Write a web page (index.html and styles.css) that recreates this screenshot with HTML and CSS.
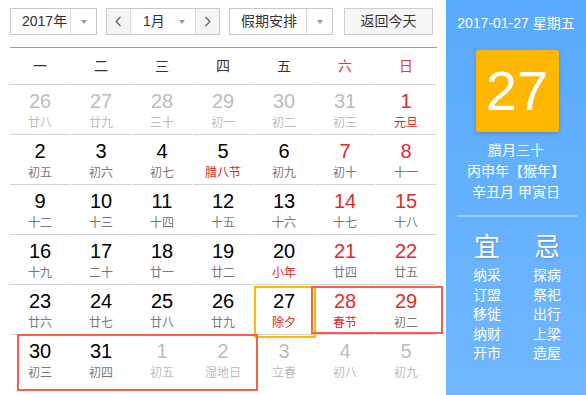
FILE: index.html
```html
<!DOCTYPE html>
<html lang="zh-CN">
<head>
<meta charset="utf-8">
<title>万年历</title>
<link rel="stylesheet" href="styles.css">
</head>
<body>
<div class="app">
  <div class="main">
    <div class="toolbar">
      <div class="select year">
        <span class="val">2017年</span>
        <span class="arrow"><i class="tri"></i></span>
      </div>
      <div class="monthgroup">
        <span class="nav prev"><svg width="7" height="11" viewBox="0 0 7 11"><polyline points="5.5,0.8 1.2,5.5 5.5,10.2" fill="none" stroke="#555" stroke-width="1.2"/></svg></span>
        <span class="month"><span>1月</span><i class="tri"></i></span>
        <span class="nav next"><svg width="7" height="11" viewBox="0 0 7 11"><polyline points="1.5,0.8 5.8,5.5 1.5,10.2" fill="none" stroke="#555" stroke-width="1.2"/></svg></span>
      </div>
      <div class="select holiday">
        <span class="val">假期安排</span>
        <span class="arrow"><i class="tri"></i></span>
      </div>
      <span class="today-btn">返回今天</span>
    </div>
    <div class="weekdays">
      <span>一</span><span>二</span><span>三</span><span>四</span><span>五</span><span class="we">六</span><span class="we">日</span>
    </div>
    <div class="grid">
      <div class="cell other"><b>26</b><i>廿八</i></div>
      <div class="cell other"><b>27</b><i>廿九</i></div>
      <div class="cell other"><b>28</b><i>三十</i></div>
      <div class="cell other"><b>29</b><i>初一</i></div>
      <div class="cell other"><b>30</b><i>初二</i></div>
      <div class="cell other"><b>31</b><i>初三</i></div>
      <div class="cell red"><b>1</b><i class="fest">元旦</i></div>

      <div class="cell"><b>2</b><i>初五</i></div>
      <div class="cell"><b>3</b><i>初六</i></div>
      <div class="cell"><b>4</b><i>初七</i></div>
      <div class="cell"><b>5</b><i class="fest">腊八节</i></div>
      <div class="cell"><b>6</b><i>初九</i></div>
      <div class="cell red"><b>7</b><i>初十</i></div>
      <div class="cell red"><b>8</b><i>十一</i></div>

      <div class="cell"><b>9</b><i>十二</i></div>
      <div class="cell"><b>10</b><i>十三</i></div>
      <div class="cell"><b>11</b><i>十四</i></div>
      <div class="cell"><b>12</b><i>十五</i></div>
      <div class="cell"><b>13</b><i>十六</i></div>
      <div class="cell red"><b>14</b><i>十七</i></div>
      <div class="cell red"><b>15</b><i>十八</i></div>

      <div class="cell"><b>16</b><i>十九</i></div>
      <div class="cell"><b>17</b><i>二十</i></div>
      <div class="cell"><b>18</b><i>廿一</i></div>
      <div class="cell"><b>19</b><i>廿二</i></div>
      <div class="cell"><b>20</b><i class="fest">小年</i></div>
      <div class="cell red"><b>21</b><i>廿四</i></div>
      <div class="cell red"><b>22</b><i>廿五</i></div>

      <div class="cell"><b>23</b><i>廿六</i></div>
      <div class="cell"><b>24</b><i>廿七</i></div>
      <div class="cell"><b>25</b><i>廿八</i></div>
      <div class="cell"><b>26</b><i>廿九</i></div>
      <div class="cell today"><b>27</b><i class="fest">除夕</i></div>
      <div class="cell red"><b>28</b><i class="fest">春节</i></div>
      <div class="cell red"><b>29</b><i>初二</i></div>

      <div class="cell"><b>30</b><i>初三</i></div>
      <div class="cell"><b>31</b><i>初四</i></div>
      <div class="cell other"><b>1</b><i>初五</i></div>
      <div class="cell other"><b>2</b><i>湿地日</i></div>
      <div class="cell other"><b>3</b><i>立春</i></div>
      <div class="cell other"><b>4</b><i>初八</i></div>
      <div class="cell other"><b>5</b><i>初九</i></div>

      <div class="holiday-box box-a"></div>
      <div class="holiday-box box-b"></div>
    </div>
  </div>
  <aside class="side">
    <div class="side-date">2017-01-27 星期五</div>
    <div class="big-day">27</div>
    <div class="lunar-info">
      <div>腊月三十</div>
      <div>丙申年【猴年】</div>
      <div>辛丑月 甲寅日</div>
    </div>
    <div class="sep"></div>
    <div class="yiji">
      <div class="col">
        <div class="yj-title">宜</div>
        <div>纳采</div><div>订盟</div><div>移徙</div><div>纳财</div><div>开市</div>
      </div>
      <div class="col">
        <div class="yj-title">忌</div>
        <div>探病</div><div>祭祀</div><div>出行</div><div>上梁</div><div>造屋</div>
      </div>
    </div>
  </aside>
</div>
</body>
</html>
```
FILE: styles.css
```css
* { box-sizing: border-box; }
html, body {
  margin: 0;
  padding: 0;
  width: 586px;
  height: 395px;
  overflow: hidden;
  background: #fff;
  font-family: "Liberation Sans", "Noto Sans CJK SC", sans-serif;
  color: #333;
}
.app {
  display: flex;
  width: 586px;
  height: 395px;
}
.main {
  width: 446px;
  padding: 8px 0 0 10px;
}
.toolbar {
  display: flex;
  height: 27px;
  font-size: 14px;
  color: #333;
}
.select {
  display: flex;
  height: 27px;
  border: 1px solid #c8c8c8;
  background: #fff;
}
.select .val {
  flex: 1;
  padding-left: 11px;
  line-height: 25px;
}
.select .arrow {
  width: 26px;
  border-left: 1px solid #dcdcdc;
  display: flex;
  align-items: center;
  justify-content: center;
}
.tri {
  display: block;
  width: 0;
  height: 0;
  border-style: solid;
  border-width: 4px 3.5px 0 3.5px;
  border-color: #999 transparent transparent transparent;
}
.year { width: 87px; }
.monthgroup {
  display: flex;
  width: 114px;
  height: 27px;
  margin-left: 9px;
  border: 1px solid #c8c8c8;
}
.nav {
  width: 24px;
  background: #f5f5f5;
  display: flex;
  align-items: center;
  justify-content: center;
}
.nav.prev { border-right: 1px solid #dcdcdc; }
.nav.next { border-left: 1px solid #dcdcdc; }
.month {
  flex: 1;
  display: flex;
  align-items: center;
  justify-content: space-between;
  padding: 0 10px 0 12px;
  line-height: 25px;
}
.holiday {
  width: 104px;
  margin-left: 9px;
}
.today-btn {
  width: 89px;
  height: 27px;
  margin-left: 11px;
  border: 1px solid #cfcfcf;
  background: #f6f6f6;
  text-align: center;
  line-height: 25px;
}
.weekdays {
  display: grid;
  grid-template-columns: repeat(7, 60px);
  column-gap: 1px;
  width: 427px;
  margin-top: 12px;
  border-top: 1px solid #5fa9ef;
  height: 37px;
  font-size: 14px;
  color: #333;
}
.weekdays span {
  text-align: center;
  line-height: 36px;
}
.weekdays .we { color: #e23a3a; }
.grid {
  position: relative;
  display: grid;
  grid-template-columns: repeat(7, 60px);
  grid-auto-rows: 50px;
  column-gap: 1px;
  width: 427px;
}
.cell {
  position: relative;
  border-top: 1px solid #d2d2d2;
  text-align: center;
}
.cell b {
  display: block;
  font-weight: normal;
  font-size: 20px;
  line-height: 22px;
  padding-top: 5px;
  color: #000;
}
.cell i {
  display: block;
  font-style: normal;
  font-size: 12px;
  line-height: 16px;
  padding-top: 3px;
  color: #777;
}
.cell.red b { color: #e22b2b; }
.cell i.fest { color: #e02424; }
.cell.other b, .cell.other i { color: #bdbdbd; }
.cell.today::after {
  content: "";
  position: absolute;
  left: 0;
  top: 1px;
  width: 58px;
  height: 48px;
  border: 2px solid #ffba00;
}
.holiday-box {
  position: absolute;
  border: 2px solid #f5604f;
}
.box-a { left: 301px; top: 202px; width: 132px; height: 48px; }
.box-b { left: 7px; top: 250px; width: 241px; height: 57px; }

.side {
  width: 140px;
  height: 395px;
  background: linear-gradient(to bottom, #59aafd, #70b7ff);
  color: #fff;
  font-size: 14px;
  text-align: center;
}
.side-date {
  margin-top: 13px;
  line-height: 20px;
}
.big-day {
  width: 83px;
  height: 82px;
  margin: 17px auto 0;
  position: relative;
  left: 1px;
  background: #ffb700;
  border-radius: 3px;
  box-shadow: 0 2px 4px rgba(0, 0, 0, 0.18);
  font-size: 56px;
  line-height: 82px;
  color: #fff;
}
.lunar-info {
  margin-top: 8px;
  line-height: 21px;
}
.sep {
  height: 2px;
  margin: 12px 8px 0 11px;
  background: rgba(255, 255, 255, 0.35);
}
.yiji {
  display: flex;
  margin: 15px 0 0 11px;
}
.yiji .col {
  width: 60px;
  line-height: 19.5px;
}
.yj-title {
  font-size: 26px;
  line-height: 30px;
  margin-bottom: 4px;
  text-shadow: 1px 1px 2px rgba(0, 0, 0, 0.2);
}
```
